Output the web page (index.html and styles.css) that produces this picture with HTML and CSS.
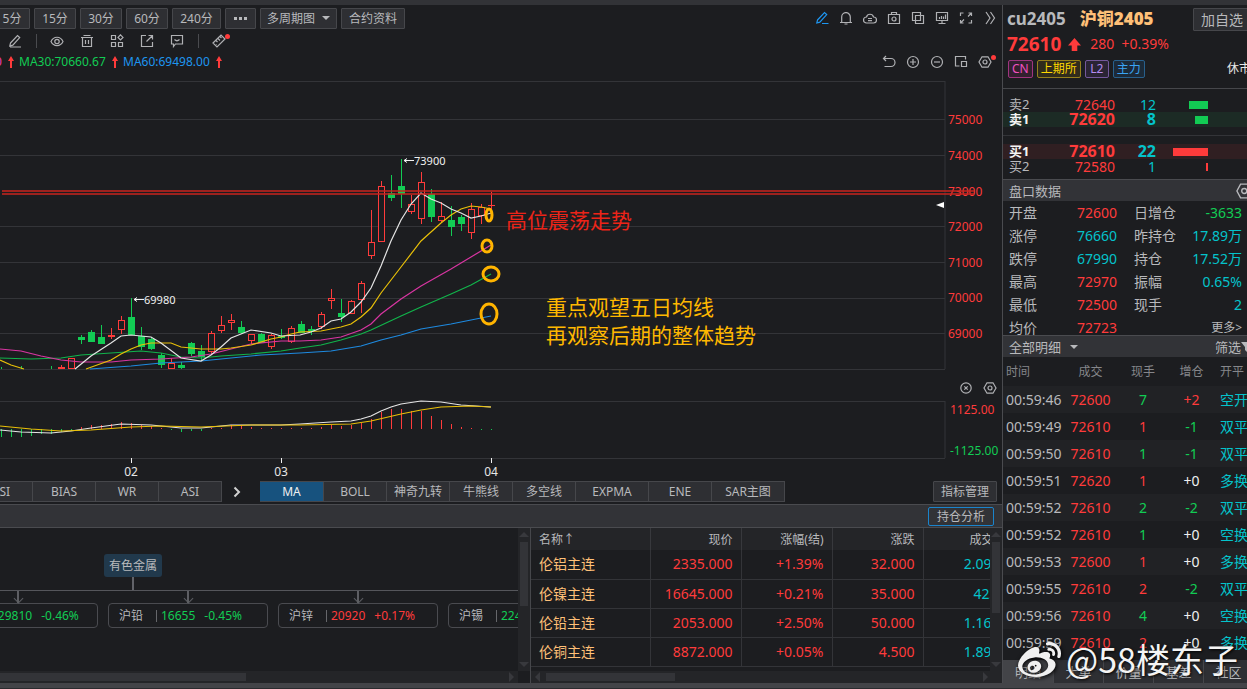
FILE: index.html
```html
<!DOCTYPE html>
<html lang="zh-CN">
<head>
<meta charset="utf-8">
<title>沪铜2405</title>
<link rel="stylesheet" href="styles.css">
</head>
<body>
<div class="titlebar"></div>
<div class="workspace">
  <main class="main">
    <div class="bar periods">
      <button class="btn">5分</button><button class="btn">15分</button><button class="btn">30分</button><button class="btn">60分</button><button class="btn wide">240分</button><button class="btn dots" aria-label="更多周期"><i></i><i></i><i></i></button><button class="btn multi">多周期图<span class="caret"></span></button><button class="btn info">合约资料</button>
      <div class="icons right">
        <button class="ic blue" aria-label="画线"><svg viewBox="0 0 14 14"><path d="M2.5 9 9.5 1.5 11.7 3.6 4.8 11.2 1.8 12ZM7 12.5H13.5"/></svg></button>
        <button class="ic" aria-label="预警"><svg viewBox="0 0 14 14"><path d="M1 11.5H13M2.7 11.500V6A4.3 4.3 0 0 1 11.3 6V11.5M6 1.500H8M5.500 13H8.500"/></svg></button>
        <button class="ic" aria-label="云"><svg viewBox="0 0 14 14"><path d="M3.500 12A3 3 0 0 1 3.500 6A3.600 3.600 0 0 1 10.500 6A3 3 0 0 1 10.500 12ZM5 7.500H9M5 9.700H9"/></svg></button>
        <button class="ic" aria-label="截图"><svg viewBox="0 0 14 14"><path d="M1.500 3.500H12.500V12.500H1.500ZM4.500 3.500V1.500H9.500V3.500"/><circle cx="7" cy="8" r="2"/></svg></button>
        <button class="ic" aria-label="叠加"><svg viewBox="0 0 14 14"><path d="M1.500 1.500H9.500V9.500H1.500ZM4.500 4.500H12.500V12.500H4.500Z"/></svg></button>
        <button class="ic" aria-label="屏幕"><svg viewBox="0 0 14 14"><path d="M1.500 1.500H12.500V9.500H1.500ZM4.500 6V8M6.500 5V8M8.500 5.500V8M10.500 3.500V8M7 10V12.500M3.500 12.500H10.500"/></svg></button>
        <button class="ic" aria-label="全屏"><svg viewBox="0 0 14 14"><path d="M1.500 5V2H4.500M9.500 2H12.500V5M12.500 9V12H9.500M4.500 12H1.500V9M9 5.500 12 2.500M5 8.500 2 11.500"/></svg></button>
        <button class="ic" aria-label="展开"><svg viewBox="0 0 14 14"><path d="M3 1 7 7 3 13M7.500 1 11.500 7 7.500 13"/></svg></button>
      </div>
    </div>
    <div class="bar tools">
      <button class="ic t" aria-label="画笔"><svg viewBox="0 0 14 14"><path d="M2.500 9 9.500 1.500 11.700 3.600 4.800 11.200 1.800 12ZM2 13H13"/></svg></button>
      <span class="sep"></span>
      <button class="ic t" aria-label="显示"><svg viewBox="0 0 14 14"><path d="M1 7.500C3.600 1.800 10.400 1.800 13 7.500 10.400 13 3.600 13 1 7.500Z"/><circle cx="7" cy="7.500" r="2.200"/></svg></button>
      <button class="ic t" aria-label="删除"><svg viewBox="0 0 14 14"><path d="M1 3.500H13M2.500 3.500V12.500H11.500V3.500M3.500 1.500H10.500M5.500 6V10M8.500 6V10"/></svg></button>
      <button class="ic t" aria-label="组件"><svg viewBox="0 0 14 14"><path d="M1.500 1.500H5.500V5.500H1.500ZM1.500 8.500H5.500V12.500H1.500ZM8.500 8.500H12.500V12.500H8.500ZM10.500 .8 13 3.400 10.500 6 8 3.400Z"/></svg></button>
      <button class="ic t" aria-label="导出"><svg viewBox="0 0 14 14"><path d="M6 1.500H1.500V12.500H12.500V8M8.500 1.500H12.500V5.500M12 2 6.500 7.500"/></svg></button>
      <button class="ic t" aria-label="留言"><svg viewBox="0 0 14 14"><path d="M1.500 1.500H12.500V10H5.500L3.500 12.500V10H1.500ZM4.500 5.500Q7 8 9.500 5.500"/></svg></button>
      <span class="sep"></span>
      <button class="ic t dot" aria-label="测量"><svg viewBox="0 0 14 14"><path d="M1 9 9 1 13 5 5 13ZM4 6.500 5.500 8M6 4.500 8 6.500M8 2.500 9.500 4M4.500 10.500H5"/></svg></button>
    </div>
    <div class="bar averages">
      <span class="ma pink">MA20:71434.50<svg viewBox="0 0 8 12"><path d="M4 0 7 5H5V12H3V5H1Z"/></svg></span>
      <span class="ma green">MA30:70660.67<svg viewBox="0 0 8 12"><path d="M4 0 7 5H5V12H3V5H1Z"/></svg></span>
      <span class="ma azure">MA60:69498.00<svg viewBox="0 0 8 12"><path d="M4 0 7 5H5V12H3V5H1Z"/></svg></span>
      <div class="icons right inset">
        <button class="ic" aria-label="撤销"><svg viewBox="0 0 14 14"><path d="M4 1 1.500 3.500 4 6M1.500 3.500H9A4 4 0 0 1 9 11.500H2.500"/></svg></button>
        <button class="ic" aria-label="放大"><svg viewBox="0 0 14 14"><circle cx="7" cy="7" r="5.500"/><path d="M4 7H10M7 4V10"/></svg></button>
        <button class="ic" aria-label="缩小"><svg viewBox="0 0 14 14"><circle cx="7" cy="7" r="5.500"/><path d="M4 7H10"/></svg></button>
        <button class="ic" aria-label="区间"><svg viewBox="0 0 14 14"><path d="M5.500 11H1.500V1.500H11.500V4.500M7.500 6.500H12.500V11.500H7.500Z"/></svg></button>
        <button class="ic dot" aria-label="设置"><svg viewBox="0 0 14 14"><path d="M4 1.800H10L13 7 10 12.200H4L1 7Z"/><circle cx="7" cy="7" r="2"/></svg></button>
      </div>
    </div>
    <svg class="chart price" role="img" aria-label="K线图">
      <g transform="translate(0,-72)">
        <svg x="-57" y="0" width="100%" height="400" overflow="visible" class="grid">
          <line x1="57" x2="100%" y1="81.5" y2="81.5"/><line x1="57" x2="100%" y1="119.5" y2="119.5"/><line x1="57" x2="100%" y1="155.5" y2="155.5"/><line x1="57" x2="100%" y1="226.5" y2="226.5"/><line x1="57" x2="100%" y1="262.5" y2="262.5"/><line x1="57" x2="100%" y1="298.5" y2="298.5"/><line x1="57" x2="100%" y1="333.5" y2="333.5"/><line x1="57" x2="100%" y1="369.5" y2="369.5"/>
          <line x1="100%" x2="100%" y1="81" y2="369"/>
        </svg>
        <g id="candles"></g>
        <g class="curves">
          <polyline class="c-azure" points="90,369 131,366 161,363 201,361 231,358 261,355 300,353 331,351 361,346 371,343 381,340 401,335 421,329 451,324 471,320 491,316"/>
          <polyline class="c-green" points="0,358 31,359 61,358 81,355 111,353 141,351 161,353 181,357 201,358 221,356 251,354 281,351 300,348 321,345 341,340 361,334 371,330 401,316 421,307 451,294 471,285 491,274"/>
          <polyline class="c-pink" points="0,349 21,351 41,356 61,360 81,362 111,362 131,360 161,359 191,357 211,354 231,349 251,344 281,341 300,341 321,340 341,337 361,330 371,324 381,314 401,299 421,286 451,269 471,257 491,245"/>
          <polyline class="c-yellow" points="0,360 11,365 24,369"/>
          <polyline class="c-yellow" points="86,369 111,360 121,354 131,349 141,345 151,343 171,343 181,347 201,349 221,349 231,348 251,345 271,339 281,337 291,334 300,332 321,331 341,327 351,324 361,317 371,308 381,293 401,267 421,241 431,232 441,223 451,215 461,209 471,206 481,207 491,209"/>
          <polyline class="c-white" points="75,369 91,356 111,343 121,336 131,335 151,337 161,343 181,358 201,361 211,355 221,347 231,338 251,330 271,333 281,336 300,335 311,332 321,328 331,321 341,319 351,312 361,302 371,288 381,266 391,241 401,220 411,204 421,193 431,199 441,203 451,209 461,213 471,218 481,216 491,213"/>
        </g>
        <g class="peak">
          <path d="M404 160.5H414M407 158.5 404 160.5 407 162.5M134 299.5H144M137 297.5 134 299.5 137 301.5"/>
          <text x="414" y="165">73900</text><text x="144" y="304">69980</text>
        </g>
        <svg x="100%" y="0" width="1" height="400" overflow="visible" class="axis">
          <path class="mark" d="M-58 202V208L-66 205Z"/>
          <text x="-54" y="124">75000</text><text x="-54" y="160">74000</text><text x="-54" y="196">73000</text><text x="-54" y="231">72000</text><text x="-54" y="267">71000</text><text x="-54" y="302">70000</text><text x="-54" y="338">69000</text>
        </svg>
        <svg x="-28" y="0" width="100%" height="400" overflow="visible" class="resist">
          <line x1="30" x2="100%" y1="191" y2="191"/><line x1="30" x2="100%" y1="194" y2="194"/>
        </svg>
        <g class="rings">
          <ellipse cx="489" cy="215" rx="3" ry="6"/><ellipse cx="487" cy="246" rx="5" ry="6"/><ellipse cx="491" cy="274" rx="8" ry="7"/><ellipse cx="489" cy="314" rx="8" ry="10"/>
        </g>
        <text class="note red" x="506" y="228">高位震荡走势</text>
        <text class="note gold" x="546" y="315">重点观望五日均线</text>
        <text class="note gold" x="546" y="343">再观察后期的整体趋势</text>
      </g>
    </svg>
    <div class="bar subhead">
      <div class="icons right">
        <button class="ic" aria-label="关闭指标"><svg viewBox="0 0 14 14"><circle cx="7" cy="7" r="5.2"/><path d="M5.3 5.3 8.7 8.7M8.7 5.3 5.3 8.7"/></svg></button>
        <button class="ic" aria-label="指标设置"><svg viewBox="0 0 14 14"><path d="M4 1.8H10L13 7 10 12.2H4L1 7Z"/><circle cx="7" cy="7" r="2"/></svg></button>
      </div>
    </div>
    <svg class="chart macd" role="img" aria-label="MACD">
      <g transform="translate(0,-399)">
        <svg x="-57" y="0" width="100%" height="480" overflow="visible" class="grid">
          <line x1="57" x2="100%" y1="401.5" y2="401.5"/><line x1="57" x2="100%" y1="458.5" y2="458.5"/><line x1="100%" x2="100%" y1="401" y2="458"/>
        </svg>
        <g id="histogram"></g>
        <g class="curves">
          <polyline class="c-white" points="0,430 21,432 51,433 71,431 91,428 121,424 151,425 181,428 201,428 231,425 281,425 300,424 331,422 351,421 361,419 371,416 381,411 391,407 401,404 421,401 441,402 461,405 491,407"/>
          <polyline class="c-yellow" points="0,426 31,429 61,431 91,430 131,427 161,426 201,427 251,425 300,425 351,424 371,421 401,414 421,410 441,407 471,406 491,407"/>
        </g>
        <g class="months">
          <path d="M131.5 458V463M281.5 458V463M491.5 458V463"/>
          <text x="131" y="476">02</text><text x="281" y="476">03</text><text x="491" y="476">04</text>
        </g>
        <svg x="100%" y="0" width="1" height="480" overflow="visible" class="axis">
          <text x="-52" y="414">1125.00</text><text class="down" x="-52" y="455">-1125.00</text>
        </svg>
      </g>
    </svg>
    <nav class="tabs">
      <button class="tab lead">RSI</button><button class="tab">BIAS</button><button class="tab">WR</button><button class="tab">ASI</button>
      <button class="next" aria-label="下一组"><svg viewBox="0 0 8 12"><path d="M1.5 1.5 6 6 1.5 10.5"/></svg></button>
      <button class="tab on">MA</button><button class="tab">BOLL</button><button class="tab">神奇九转</button><button class="tab">牛熊线</button><button class="tab">多空线</button><button class="tab long">EXPMA</button><button class="tab">ENE</button><button class="tab long">SAR主图</button>
      <button class="btn manage">指标管理</button>
    </nav>
    <div class="band"><button class="analysis">持仓分析</button></div>
    <div class="lower">
      <section class="tree">
        <div class="canvas">
          <div class="root">有色金属</div>
          <div class="stem"></div>
          <div class="branches">
            <div class="leaf down"><span class="name">沪镍</span><span>129810</span><span>-0.46%</span></div>
            <div class="leaf down"><span class="name">沪铅</span><span>16655</span><span>-0.45%</span></div>
            <div class="leaf up"><span class="name">沪锌</span><span>20920</span><span>+0.17%</span></div>
            <div class="leaf down"><span class="name">沪锡</span><span>224550</span><span>-0.31%</span></div>
          </div>
        </div>
        <div class="vbar"><b class="ar n"></b><div class="thumb"></div><b class="ar s"></b></div>
        <div class="hbar"><div class="thumb"></div><b class="ar e"></b></div>
      </section>
      <section class="quotes">
        <div class="clip">
          <table>
            <colgroup><col class="q0"><col class="q1"><col class="q1"><col class="q1"><col class="q1"></colgroup>
            <thead><tr><th>名称↑</th><th>现价</th><th>涨幅(结)</th><th>涨跌</th><th>成交量</th></tr></thead>
            <tbody>
              <tr><td>伦铝主连</td><td>2335.000</td><td>+1.39%</td><td>32.000</td><td>2.09万</td></tr>
              <tr><td>伦镍主连</td><td>16645.000</td><td>+0.21%</td><td>35.000</td><td>4236</td></tr>
              <tr><td>伦铅主连</td><td>2053.000</td><td>+2.50%</td><td>50.000</td><td>1.16万</td></tr>
              <tr><td>伦铜主连</td><td>8872.000</td><td>+0.05%</td><td>4.500</td><td>1.89万</td></tr>
            </tbody>
          </table>
        </div>
        <div class="vbar"><b class="ar n"></b><div class="thumb"></div><b class="ar s"></b></div>
        <div class="hbar"><b class="ar w"></b><div class="thumb"></div><b class="ar e"></b></div>
      </section>
    </div>
  </main>

  <aside class="side">
    <header class="head">
      <div class="title"><span>cu2405</span><strong>沪铜2405</strong><button class="btn fav">加自选</button></div>
      <div class="last"><strong>72610</strong><svg viewBox="0 0 14 14"><path d="M7 0 14 8H10V14H4V8H0Z"/></svg><span>280</span><span>+0.39%</span></div>
      <div class="tags"><span class="tag mag">CN</span><span class="tag yel">上期所</span><span class="tag vio">L2</span><span class="tag blu">主力</span><span class="state">休市</span></div>
    </header>
    <div class="book asks">
      <div class="lv"><span>卖2</span><span>72640</span><span>12</span><i style="width:19px"></i></div>
      <div class="lv best"><span>卖1</span><span>72620</span><span>8</span><i style="width:13px"></i></div>
    </div>
    <div class="book bids">
      <div class="lv best"><span>买1</span><span>72610</span><span>22</span><i style="width:35px"></i></div>
      <div class="lv"><span>买2</span><span>72580</span><span>1</span><i style="width:2px"></i></div>
    </div>
    <div class="caption"><span>盘口数据</span><button class="gear" aria-label="盘口设置"><svg viewBox="0 0 14 14"><path d="M4 1H10.5L13.5 7 10.5 13H4L.8 7Z"/><circle cx="7.2" cy="7" r="2.2"/></svg></button></div>
    <div class="stats">
      <span>开盘</span><b class="up">72600</b><span>日增仓</span><b class="down">-3633</b>
      <span>涨停</span><b>76660</b><span>昨持仓</span><b>17.89万</b>
      <span>跌停</span><b>67990</b><span>持仓</span><b>17.52万</b>
      <span>最高</span><b class="up">72970</b><span>振幅</span><b>0.65%</b>
      <span>最低</span><b class="up">72500</b><span>现手</span><b>2</b>
      <span>均价</span><b class="up">72723</b><a class="more" href="#more">更多&gt;</a>
    </div>
    <div class="caption"><button class="pick">全部明细<span class="caret"></span></button><button class="filter">筛选<svg viewBox="0 0 10 10"><path d="M0 0H10L6 5V10L4 8V5Z"/></svg></button></div>
    <table class="trades">
      <colgroup><col class="t0"><col class="t1"><col class="t2"><col class="t3"><col></colgroup>
      <thead><tr><th>时间</th><th>成交</th><th>现手</th><th>增仓</th><th>开平</th></tr></thead>
      <tbody>
        <tr><td>00:59:46</td><td>72600</td><td class="down">7</td><td class="up">+2</td><td>空开</td></tr>
        <tr><td>00:59:49</td><td>72610</td><td class="up">1</td><td class="down">-1</td><td>双平</td></tr>
        <tr><td>00:59:50</td><td>72610</td><td class="down">1</td><td class="down">-1</td><td>双平</td></tr>
        <tr><td>00:59:51</td><td>72620</td><td class="up">1</td><td>+0</td><td>多换</td></tr>
        <tr><td>00:59:52</td><td>72610</td><td class="down">2</td><td class="down">-2</td><td>双平</td></tr>
        <tr><td>00:59:52</td><td>72610</td><td class="down">1</td><td>+0</td><td>空换</td></tr>
        <tr><td>00:59:53</td><td>72600</td><td class="up">1</td><td>+0</td><td>多换</td></tr>
        <tr><td>00:59:55</td><td>72610</td><td class="up">2</td><td class="down">-2</td><td>双平</td></tr>
        <tr><td>00:59:56</td><td>72610</td><td class="down">4</td><td>+0</td><td>空换</td></tr>
        <tr><td>00:59:59</td><td>72610</td><td class="up">2</td><td>+0</td><td>多换</td></tr>
      </tbody>
    </table>
    <nav class="foot"><button class="on">明细</button><button>大单</button><button>价量</button><button>基差</button><button>社区</button></nav>
    <div class="mark58">
      <svg viewBox="0 0 24 24"><path d="M10.098 20.323c-3.977.391-7.414-1.406-7.672-4.020-.259-2.609 2.759-5.047 6.740-5.441 3.979-.394 7.413 1.404 7.671 4.018.259 2.600-2.759 5.049-6.737 5.439l-.002.004zM9.050 17.219c-.384.616-1.208.884-1.829.602-.612-.279-.793-.991-.406-1.593.379-.595 1.176-.861 1.793-.601.622.263.820.972.442 1.592zm1.270-1.627c-.141.237-.449.353-.689.253-.236-.090-.313-.361-.177-.586.138-.227.436-.346.672-.240.239.090.315.360.180.601l.014-.028zm.176-2.719c-1.893-.493-4.033.450-4.857 2.118-.836 1.704-.026 3.591 1.886 4.210 1.983.640 4.318-.341 5.132-2.179.8-1.793-.201-3.642-2.161-4.149zm7.563-1.224c-.346-.105-.570-.180-.405-.615.375-.977.420-1.804 0-2.404-.781-1.112-2.915-1.053-5.364-.030 0 0-.766.331-.571-.271.376-1.217.315-2.224-.270-2.809-1.338-1.337-4.869.045-7.888 3.080C1.309 10.870 0 13.273 0 15.348c0 3.981 5.099 6.395 10.086 6.395 6.536 0 10.888-3.801 10.888-6.820 0-1.822-1.547-2.854-2.915-3.284v.010zm1.908-5.092c-.766-.856-1.908-1.187-2.960-.962-.436.090-.706.511-.616.932.090.420.511.691.932.602.511-.105 1.067.044 1.442.465.376.421.466.977.316 1.473-.136.406.089.856.510.992.405.119.857-.105.992-.512.330-1.021.120-2.178-.646-3.035l.030.045zm2.418-2.195c-1.576-1.757-3.905-2.419-6.054-1.968-.496.104-.812.587-.706 1.081.104.496.586.813 1.082.707 1.532-.331 3.185.150 4.296 1.383 1.112 1.246 1.429 2.943.947 4.416-.165.480.106 1.007.586 1.157.479.165.991-.104 1.157-.586.675-2.088.241-4.478-1.338-6.235l.030.045z"/></svg>
      <span>@58楼东子</span>
    </div>
  </aside>
</div>
<div class="statusbar"></div>
<script src="chart.js"></script>
</body>
</html>
```

FILE: chart.js
```js
// [x, direction, body top, body bottom, wick top, wick bottom]
const candles = [
  [1,'d',369,369,367,369],[21,'d',369,369,366,369],[51,'d',369,369,366,369],
  [61,'u',367,369,365,369],[71,'u',358,369,358,369],[81,'d',337,340,335,344],[91,'d',332,342,330,342],
  [101,'d',337,344,325,344],[111,'u',335,337,328,339],[121,'u',320,330,316,334],[131,'d',317,335,298,335],
  [141,'d',336,347,327,350],[151,'d',339,349,337,350],[161,'d',355,365,353,368],[171,'u',363,369,358,369],
  [181,'d',365,368,362,369],[191,'d',343,354,342,356],[201,'d',351,357,345,361],[211,'u',333,352,331,354],
  [221,'u',325,331,316,333],[231,'u',320,323,314,330],[241,'d',327,333,321,334],[251,'u',334,341,334,344],
  [261,'d',334,343,333,343],[271,'u',335,347,334,349],[281,'d',336,338,329,339],[291,'u',328,342,326,343],
  [301,'d',324,333,321,333],[311,'d',329,331,326,335],[321,'u',314,327,312,329],[331,'u',298,301,289,309],
  [341,'d',313,317,299,322],[351,'u',301,314,300,314],[361,'u',283,300,281,313],[371,'u',242,256,210,259],
  [381,'u',186,242,181,242],[391,'d',193,198,175,201],[401,'d',186,194,159,208],[411,'u',204,212,195,214],
  [421,'u',182,219,172,224],[431,'d',194,217,189,222],[441,'u',216,221,202,222],[451,'d',220,227,206,236],
  [461,'d',217,224,215,231],[471,'u',209,233,203,239],[481,'u',207,216,204,224],[491,'u',205,206,192,213]
];
document.getElementById('candles').innerHTML = candles.map(([x, k, t, b, wt, wb]) => {
  const wicks = `<path class="wick" d="M${x + 0.5} ${wt}V${t}M${x + 0.5} ${b}V${wb}"/>`;
  if (k === 'u' && b - t > 2) {
    return `<g class="u">${wicks}<rect class="hollow" x="${x - 2.5}" y="${t + 0.5}" width="6" height="${b - t - 1}"/></g>`;
  }
  return `<g class="${k}">${wicks}<rect class="solid" x="${x - 3}" y="${t}" width="7" height="${b - t}"/></g>`;
}).join('');

// Histogram ends relative to the zero line, ten pixels per bar
const zero = 429;
const bars = [8,8,8,7,5,5,3,2,-2,-4,-4,-5,-7,-6,-4,-3,-1,1,3,2,2,-1,-1,-4,-3,-2,-1,-1,-1,-1,
  -1,-1,-2,-4,-3,-4,-6,-10,-17,-20,-20,-18,-18,-13,-9,-5,-2,-1,1,1];
document.getElementById('histogram').innerHTML = bars.map((v, i) =>
  `<path class="${v < 0 ? 'u' : 'd'}" d="M${i * 10 + 1.5} ${zero}v${v}"/>`).join('');
```

FILE: styles.css
```css
:root {
  --bg: #1c1d20;
  --panel: #323337;
  --line: #46474b;
  --grid: #333438;
  --text: #b8b9bc;
  --up: #ff3b3b;
  --down: #12cc54;
  --cyan: #04c3cb;
}
* { box-sizing: border-box; }
body {
  margin: 0;
  height: 100vh;
  display: flex;
  flex-direction: column;
  overflow: hidden;
  background: var(--bg);
  color: var(--text);
  font: 12px/16px "Noto Sans", "Noto Sans CJK SC", sans-serif;
}
button {
  margin: 0;
  padding: 0;
  border: 0;
  background: none;
  color: inherit;
  font: inherit;
  white-space: nowrap;
}
.titlebar { flex: none; height: 5px; background: var(--panel); }
.statusbar { flex: none; height: 6px; background: #434448; border-bottom: 1px solid #2a2b2e; }
.workspace { flex: 1; min-height: 0; display: grid; grid-template-columns: minmax(0, 1fr) 245px; }
.main { display: flex; flex-direction: column; min-width: 0; min-height: 0; overflow: hidden; }
.up { color: var(--up); }
.down { color: var(--down); }

/* toolbars */
.bar { flex: none; display: flex; align-items: center; }
.btn { height: 21px; background: #2e2f33; border: 1px solid #46474b; border-radius: 1px; line-height: 19px; }
.periods { height: 26px; gap: 4px; margin-left: -6px; }
.periods .btn { width: 42px; flex: none; }
.periods .btn:first-child { width: 36px; }
.periods .btn.wide { width: 49px; }
.periods .btn.dots { width: 31px; display: flex; align-items: center; justify-content: center; gap: 2px; }
.periods .btn.multi { width: 77px; }
.periods .btn.info { width: 64px; }
.dots i { width: 3px; height: 3px; background: var(--text); }
.caret { display: inline-block; vertical-align: middle; margin: 0 0 2px 7px; border: 4px solid transparent; border-top-color: var(--text); border-bottom: 0; }
.pick .caret { margin-left: 9px; }
.icons { display: flex; }
.right { margin-left: auto; }
.inset { padding-right: 5px; }
.ic { position: relative; width: 24px; height: 18px; display: flex; align-items: center; justify-content: center; }
.ic.t { width: 30px; }
.ic svg { width: 14px; height: 14px; fill: none; stroke: #b0b1b4; stroke-width: 1.2; }
.ic.blue svg { stroke: #1e96f0; }
.ic.dot::after { content: ""; position: absolute; top: 2px; right: 1px; width: 5px; height: 5px; border-radius: 50%; background: var(--up); }
.ic.t.dot::after { right: 4px; }
.tools { height: 20px; }
.sep { width: 12px; height: 14px; background: linear-gradient(#4a4b4f, #4a4b4f) center / 1px 100% no-repeat; }
.averages { height: 21px; margin-left: -85px; }
.ma { width: 104px; display: flex; align-items: center; gap: 5px; }
.ma svg { width: 8px; height: 12px; fill: var(--up); }
.pink { color: #f03cb4; }
.green { color: var(--down); }
.azure { color: #1e96f0; }

/* charts */
.chart { flex: none; display: block; width: 100%; font-size: 12px; }
.price { height: 305px; }
.macd { height: 82px; }
.subhead { height: 22px; }
.grid line { stroke: var(--grid); }
.u .wick, path.u { stroke: var(--up); }
.d .wick, path.d { stroke: var(--down); }
.hollow { fill: var(--bg); stroke: var(--up); }
.u .solid { fill: var(--up); }
.d .solid { fill: var(--down); }
.curves polyline { fill: none; stroke-width: 1.2; }
.c-white { stroke: #e4e4e4; }
.c-yellow { stroke: #e9c008; }
.c-pink { stroke: #d935a2; }
.c-green { stroke: #11b44b; }
.c-azure { stroke: #1e8ae0; }
.peak path { stroke: #f0f0f0; fill: none; }
.peak text { fill: #f0f0f0; font-size: 11px; }
.axis text { fill: var(--up); }
.axis text.down { fill: var(--down); }
.axis .mark { fill: #ffffff; }
.resist line { stroke: #c8241e; stroke-width: 2; opacity: 0.75; }
.rings ellipse { fill: none; stroke: #ffb400; stroke-width: 3; }
.note { font-size: 21px; }
.note.red { fill: #ec2418; }
.note.gold { fill: #ffb800; }
.months path { stroke: #f0f0f0; }
.months text { fill: #e6e6e6; text-anchor: middle; }

/* indicator tabs */
.tabs { flex: none; display: flex; height: 21px; margin-bottom: 2px; }
.tab { flex: none; width: 63px; background: #2e2f33; border: 1px solid #46474b; border-left-width: 0; line-height: 19px; }
.tab.lead { margin-left: -30px; }
.tab.long { width: 73px; }
.tab.on { width: 64px; background: #17527e; color: #f0f0f0; }
.next { width: 38px; display: flex; align-items: center; justify-content: center; padding-right: 8px; }
.next svg { width: 8px; height: 12px; fill: none; stroke: #d0d0d0; stroke-width: 2; }
.manage { width: 64px; margin: 0 5px 0 auto; }
.band { flex: none; height: 24px; display: flex; align-items: center; justify-content: flex-end; padding-right: 8px; background: var(--panel); border: solid #4a4b4f; border-width: 1px 0; }
.analysis { width: 66px; height: 19px; border: 1px solid #1a84cc; border-radius: 2px; line-height: 17px; }

/* lower panels */
.lower { flex: 1; min-height: 0; display: grid; grid-template-columns: minmax(0, 530fr) minmax(0, 472fr); }
.tree, .quotes { display: grid; grid-template: minmax(0, 1fr) 12px / minmax(0, 1fr) 12px; min-height: 0; }
.quotes { border-left: 1px solid var(--line); }
.vbar, .hbar { display: flex; align-items: center; background: #242528; }
.vbar { flex-direction: column; padding: 4px 0; gap: 5px; }
.hbar { padding: 0 4px; gap: 6px; }
.quotes .hbar { grid-column: 1 / 3; padding-right: 14px; }
.thumb { background: #333438; }
.vbar .thumb { width: 8px; height: 64px; }
.quotes .vbar .thumb { height: 71px; }
.hbar .thumb { height: 8px; width: 129px; }
.tree .hbar { padding-left: 0; }
.tree .hbar .thumb { width: 246px; }
.ar { border: 5px solid transparent; }
.ar.n { border-bottom-color: #38393d; border-top: 0; }
.ar.s { border-top-color: #38393d; border-bottom: 0; margin-top: auto; }
.ar.e { border-left-color: #38393d; border-right: 0; margin-left: auto; }
.ar.w { border-right-color: #38393d; border-left: 0; }
.canvas { overflow: hidden; padding-top: 26px; }
.root { width: 58px; height: 23px; margin-left: 104px; border-radius: 3px; background: #21394c; text-align: center; line-height: 23px; }
.stem { width: 2px; height: 13px; margin-left: 132px; background: #626369; }
.branches { display: flex; gap: 10px; width: max-content; margin-left: -62px; border-top: 1px solid #55565b; padding-top: 12px; }
.leaf { position: relative; display: flex; align-items: center; gap: 9px; width: 160px; height: 25px; padding-left: 10px; border: 1px solid #4a4b50; border-radius: 4px; }
.leaf .name { width: 38px; margin-right: -5px; border-right: 1px solid #66676b; color: var(--text); line-height: 12px; }
.leaf::before { content: ""; position: absolute; left: 78px; top: -13px; width: 2px; height: 12px; background: #5d5e63; }
.leaf::after { content: ""; position: absolute; left: 76px; top: -9px; width: 6px; height: 6px; border: solid #5d5e63; border-width: 0 1px 1px 0; transform: rotate(45deg); }
.clip { overflow: hidden; }
table { border-collapse: collapse; table-layout: fixed; }
.quotes table { width: 483px; }
.q0 { width: 119px; }
.q1 { width: 91px; }
.quotes th { height: 22px; padding: 1px 8px 0; background: #242528; border-right: 1px solid #38393d; font-weight: 400; text-align: right; white-space: nowrap; }
.quotes td { height: 29px; padding: 0 8px; border: solid #333438; border-width: 0 1px 1px 0; color: var(--up); font-size: 14px; line-height: 20px; text-align: right; white-space: nowrap; }
.quotes th:first-child, .quotes td:first-child { text-align: left; }
.quotes td:first-child { color: #ffc078; }
.quotes td:last-child { color: var(--cyan); }

/* side panel */
.side { position: relative; display: flex; flex-direction: column; min-height: 0; overflow: hidden; border-left: 1px solid #4a4b4f; font-size: 14px; line-height: 20px; white-space: nowrap; }
.head { flex: none; height: 84px; border-bottom: 1px solid var(--line); padding-left: 4px; }
.title { display: flex; align-items: center; height: 28px; gap: 14px; font-size: 17px; font-weight: 700; }
.title strong { color: #ffc078; }
.fav { width: 58px; height: 23px; margin-left: auto; margin-right: -4px; font-size: 14px; font-weight: 400; }
.last { display: flex; align-items: center; height: 22px; gap: 7px; color: var(--up); }
.last strong { font-size: 19px; }
.last svg { width: 13px; height: 13px; fill: var(--up); margin-right: 2px; }
.tags { display: flex; align-items: center; height: 28px; gap: 4px; padding-left: 1px; font-size: 12px; }
.tag { min-width: 24px; height: 18px; padding: 0 3px; border: 1px solid; border-radius: 2px; text-align: center; line-height: 16px; }
.mag { color: #f050c0; border-color: #a0347f; background: #33202f; }
.yel { color: #ffd800; border-color: #96801c; background: #302c1c; }
.vio { color: #b48cf0; border-color: #74589c; background: #2a2434; }
.blu { color: #3aa4f4; border-color: #28608c; background: #1c2a38; }
.state { margin-left: auto; margin-right: -4px; color: #e8e8e8; }
.book { flex: none; }
.asks { padding: 8px 0; border-bottom: 1px solid var(--grid); }
.bids { padding: 8px 0 5px; }
.lv { display: grid; grid-template-columns: 46px 60px 41px 52px; align-items: center; height: 15px; padding-left: 6px; color: var(--cyan); line-height: 15px; }
.lv span:nth-child(n+2) { text-align: right; }
.lv span:first-child { color: var(--text); font-size: 13px; }
.lv span:nth-child(2) { color: var(--up); }
.lv.best { font-size: 16px; font-weight: 700; }
.lv.best span:first-child { color: #f4f4f4; }
.lv i { height: 8px; justify-self: end; background: var(--down); }
.bids .lv i { background: var(--up); }
.asks .best { background: #1c2b25; }
.bids .best { background: #301f22; }
.caption { flex: none; display: flex; align-items: center; justify-content: space-between; height: 22px; padding-left: 6px; border-top: 1px solid #4a4b4f; background: var(--panel); font-size: 13px; }
.gear { margin-right: -5px; }
.gear svg { display: block; width: 16px; height: 16px; fill: none; stroke: #b8b9bc; stroke-width: 1.2; }
.filter { display: flex; align-items: center; margin-right: -4px; }
.filter svg { width: 10px; height: 10px; fill: #b8b9bc; }
.stats { flex: none; display: grid; grid-template-columns: 50px 58px 60px 1fr; grid-auto-rows: 23px; align-items: center; max-height: 134px; overflow: hidden; padding: 0 5px 0 6px; }
.stats b { font-weight: 400; text-align: right; color: var(--cyan); }
.stats b.up { color: var(--up); }
.stats b.down { color: var(--down); }
.stats span:nth-of-type(even) { padding-left: 17px; }
.more { grid-column: 3 / 5; text-align: right; color: var(--text); text-decoration: none; font-size: 12px; }
.trades { flex: none; width: 100%; }
.t0 { width: 64px; }
.t1 { width: 47px; }
.t2 { width: 58px; }
.t3 { width: 39px; }
.trades th { height: 29px; padding: 1px 0 0; color: #85868a; font-size: 12px; font-weight: 400; }
.trades td { height: 27px; padding: 0; text-align: center; }
.trades th:first-child, .trades td:first-child { padding-left: 3px; text-align: left; }
.trades th:last-child, .trades td:last-child { padding-left: 9px; text-align: left; }
.trades td:last-child { color: var(--cyan); }
.trades td:nth-child(2) { color: var(--up); }
.trades td:nth-child(4):not(.up):not(.down) { color: #f0f0f0; }
.trades tbody tr:nth-child(odd) { background: #212225; }
.foot { flex: none; display: grid; grid-template-columns: 51px repeat(4, 50px); height: 23px; margin-top: auto; font-size: 13px; }
.foot button { background: #2e2f33; border-right: 1px solid #46474b; }
.foot .on { background: #434448; }
.mark58 { position: absolute; left: 15px; bottom: 2px; display: flex; align-items: center; gap: 5px; color: #f4f4f4; font: 34px/44px "Noto Sans CJK SC", sans-serif; text-shadow: 1px 1px 3px #000000; }
.mark58 svg { width: 43px; height: 43px; fill: #f0f0f0; filter: drop-shadow(1px 1px 2px #000000); }
```
